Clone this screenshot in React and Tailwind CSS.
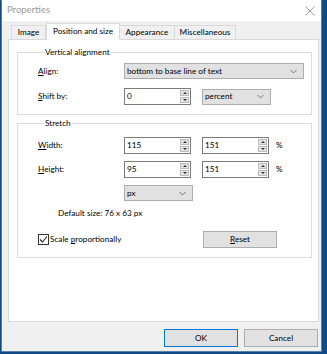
import React from "react";

function Spin({ value, w = "w-[67px]" }) {
    return (
        <div className={`flex ${w} h-[17px] border border-[#7a7a7a] bg-white`}>
            <div className="flex-1 pl-[2px] leading-[15px]">{value}</div>
            <div className="flex flex-col w-[9px] my-[1px] mr-[1px] gap-[1px]">
                <div className="flex-1 bg-[#e3e3e3] border border-[#bcbcbc] flex items-center justify-center">
                    <div className="w-0 h-0 border-l-[2px] border-r-[2px] border-b-[2px] border-l-transparent border-r-transparent border-b-[#333]" />
                </div>
                <div className="flex-1 bg-[#e3e3e3] border border-[#bcbcbc] flex items-center justify-center">
                    <div className="w-0 h-0 border-l-[2px] border-r-[2px] border-t-[2px] border-l-transparent border-r-transparent border-t-[#333]" />
                </div>
            </div>
        </div>
    );
}

function Select({ value, w }) {
    return (
        <div className={`flex items-center ${w} h-[16px] border border-[#adadad] bg-[#e1e1e1] pl-[2px] pr-[6px]`}>
            <span className="flex-1">{value}</span>
            <svg width="7" height="5" viewBox="0 0 7 5">
                <path d="M0.5 1 L3.5 4 L6.5 1" stroke="#777" fill="none" strokeWidth="1" />
            </svg>
        </div>
    );
}

export default function App() {
    return (
        <div
            className="w-[327px] h-[354px] bg-[#0f4a86] pl-[1px] pt-0 text-[8.2px] text-black"
            style={{ fontFamily: 'Lato, "Noto Sans", sans-serif' }}
        >
            <div className="w-[321px] h-[352px] bg-[#f0f0f0] border-l border-r border-b border-[#5c7fa8] flex flex-col">
                {/* title bar */}
                <div className="h-[21px] bg-white flex items-center justify-between pl-[5px] pr-[6px]">
                    <span className="text-[9.5px] text-[#9a9a9a]">Properties</span>
                    <svg width="10" height="10" viewBox="0 0 10 10">
                        <path d="M0.5 0.5 L9.5 9.5 M9.5 0.5 L0.5 9.5" stroke="#a0a0a0" strokeWidth="1" />
                    </svg>
                </div>

                {/* tabs */}
                <div className="flex items-end h-[17px] pl-[9px] mt-[1px]">
                    <div className="h-[14px] w-[35px] text-center border border-b-0 border-[#d9d9d9] bg-[#f0f0f0] leading-[13px]">Image</div>
                    <div className="h-[17px] w-[74px] text-center border border-b-0 border-[#d9d9d9] bg-white leading-[14px] relative top-[1px]">
                        Position and size
                    </div>
                    <div className="h-[14px] w-[55px] text-center border border-b-0 border-l-0 border-[#d9d9d9] bg-[#f0f0f0] leading-[13px]">
                        Appearance
                    </div>
                    <div className="h-[14px] w-[61px] text-center border border-b-0 border-l-0 border-[#d9d9d9] bg-[#f0f0f0] leading-[13px]">
                        Miscellaneous
                    </div>
                </div>

                {/* panel */}
                <div className="ml-[6px] w-[311px] h-[283px] bg-white border border-[#d9d9d9] pl-[8px]">
                    <fieldset className="mt-[7px] w-[295px] border border-[#dcdcdc] pl-[20px] pb-[9px]">
                        <legend className="ml-[6px] px-[1px] leading-[10px]">Vertical alignment</legend>
                        <div className="flex items-center mt-[6px] h-[16px]">
                            <span className="w-[86px]"><u>A</u>lign:</span>
                            <Select value="bottom to base line of text" w="w-[180px]" />
                        </div>
                        <div className="flex items-center mt-[9px] h-[17px]">
                            <span className="w-[86px]"><u>S</u>hift by:</span>
                            <Spin value="0" />
                            <div className="ml-[11px]">
                                <Select value="percent" w="w-[69px]" />
                            </div>
                        </div>
                    </fieldset>

                    <fieldset className="mt-[3px] w-[295px] border border-[#dcdcdc] pl-[20px] pb-[9px]">
                        <legend className="ml-[6px] px-[1px] leading-[10px]">Stretch</legend>
                        <div className="flex items-center mt-[9px] h-[17px]">
                            <span className="w-[86px]"><u>W</u>idth:</span>
                            <Spin value="115" />
                            <div className="ml-[11px]">
                                <Spin value="151" />
                            </div>
                            <span className="ml-[7px]">%</span>
                        </div>
                        <div className="flex items-center mt-[7px] h-[17px]">
                            <span className="w-[86px]"><u>H</u>eight:</span>
                            <Spin value="95" />
                            <div className="ml-[11px]">
                                <Spin value="151" />
                            </div>
                            <span className="ml-[7px]">%</span>
                        </div>
                        <div className="flex items-center mt-[7px] h-[16px] pl-[86px]">
                            <Select value="px" w="w-[69px]" />
                        </div>
                        <div className="mt-[6px] pl-[20px] leading-[12px]">Default size: 76 x 63 px</div>
                        <div className="flex items-center mt-[12px] h-[17px]">
                            <div className="w-[11px] h-[11px] border border-[#333] bg-white flex items-center justify-center">
                                <svg width="9" height="9" viewBox="0 0 9 9">
                                    <path d="M1 4.5 L3.5 7 L8 1.5" stroke="#222" fill="none" strokeWidth="1.1" />
                                </svg>
                            </div>
                            <span className="ml-[1px]">Scale <u>p</u>roportionally</span>
                            <div className="ml-auto mr-[34px] w-[74px] h-[17px] bg-[#e1e1e1] border border-[#adadad] flex items-center justify-center">
                                <span><u>R</u>eset</span>
                            </div>
                        </div>
                    </fieldset>
                </div>

                {/* buttons */}
                <div className="flex justify-end gap-[6px] mt-[7px] pr-[3px]">
                    <div className="w-[74px] h-[18px] bg-[#e1e1e1] border border-[#0078d7] flex items-center justify-center">OK</div>
                    <div className="w-[74px] h-[18px] bg-[#e1e1e1] border border-[#adadad] flex items-center justify-center">Cancel</div>
                </div>
            </div>
        </div>
    );
}
